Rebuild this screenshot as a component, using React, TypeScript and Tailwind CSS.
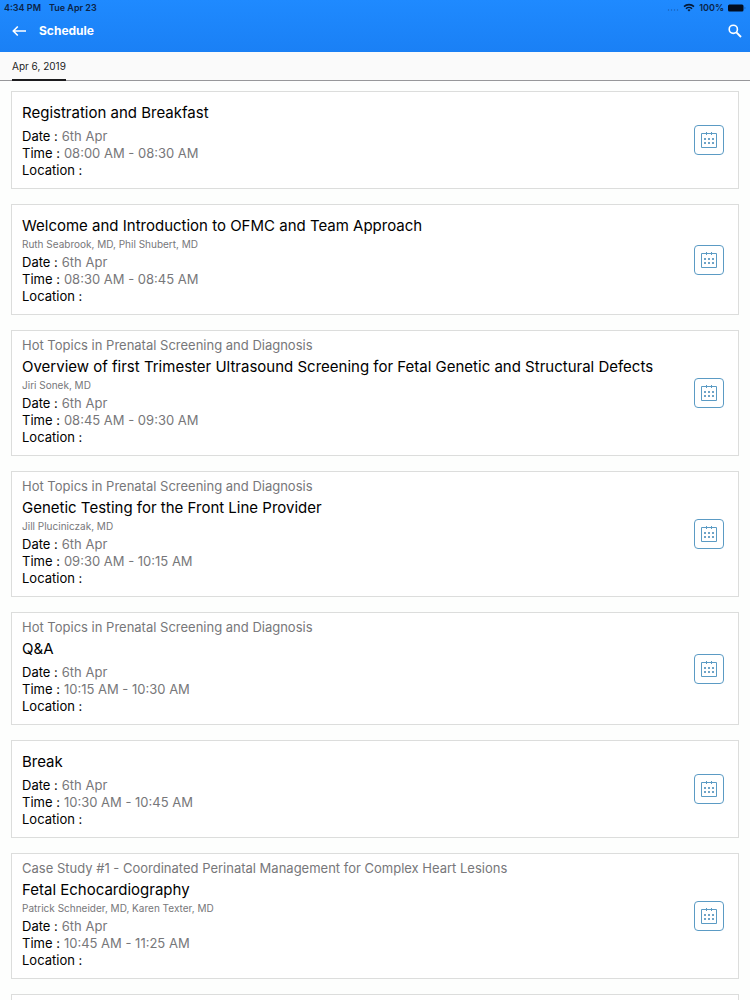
import React from 'react';

interface Session {
  id: number;
  track?: string;
  title: string;
  speakers?: string;
  date: string;
  time: string;
  location: string;
}

const sessions: Session[] = [
  { id: 1, title: 'Registration and Breakfast', date: '6th Apr', time: '08:00 AM - 08:30 AM', location: '' },
  {
    id: 2,
    title: 'Welcome and Introduction to OFMC and Team Approach',
    speakers: 'Ruth Seabrook, MD, Phil Shubert, MD',
    date: '6th Apr',
    time: '08:30 AM - 08:45 AM',
    location: '',
  },
  {
    id: 3,
    track: 'Hot Topics in Prenatal Screening and Diagnosis',
    title: 'Overview of first Trimester Ultrasound Screening for Fetal Genetic and Structural Defects',
    speakers: 'Jiri Sonek, MD',
    date: '6th Apr',
    time: '08:45 AM - 09:30 AM',
    location: '',
  },
  {
    id: 4,
    track: 'Hot Topics in Prenatal Screening and Diagnosis',
    title: 'Genetic Testing for the Front Line Provider',
    speakers: 'Jill Pluciniczak, MD',
    date: '6th Apr',
    time: '09:30 AM - 10:15 AM',
    location: '',
  },
  {
    id: 5,
    track: 'Hot Topics in Prenatal Screening and Diagnosis',
    title: 'Q&A',
    date: '6th Apr',
    time: '10:15 AM - 10:30 AM',
    location: '',
  },
  { id: 6, title: 'Break', date: '6th Apr', time: '10:30 AM - 10:45 AM', location: '' },
  {
    id: 7,
    track: 'Case Study #1 - Coordinated Perinatal Management for Complex Heart Lesions',
    title: 'Fetal Echocardiography',
    speakers: 'Patrick Schneider, MD, Karen Texter, MD',
    date: '6th Apr',
    time: '10:45 AM - 11:25 AM',
    location: '',
  },
];

const CalendarIcon = () => (
  <svg viewBox="0 0 18 18" className="h-[18px] w-[18px]" fill="none" stroke="#5b9bc4" aria-hidden="true">
    <path d="M1.5 2.5h15v14h-15z" />
    <path d="M6.5 1v3M11.5 1v3" />
    <g fill="#3f86b4" stroke="none">
      <circle cx="5" cy="8" r="1" />
      <circle cx="9" cy="8" r="1" />
      <circle cx="13" cy="8" r="1" />
      <circle cx="5" cy="12" r="1" />
      <circle cx="9" cy="12" r="1" />
      <circle cx="13" cy="12" r="1" />
    </g>
  </svg>
);

const StatusBar = () => (
  <div className="flex h-[15px] items-center justify-between px-1 text-[9px] leading-[15px] font-semibold text-[#0b2447]">
    <div className="flex gap-2">
      <span>4:34 PM</span>
      <span>Tue Apr 23</span>
    </div>
    <div className="flex items-center gap-1">
      <svg viewBox="0 0 12 8" className="h-2 w-3" fill="#1560b8" aria-hidden="true">
        <circle cx="1.5" cy="6" r="0.7" />
        <circle cx="4.5" cy="6" r="0.7" />
        <circle cx="7.5" cy="6" r="0.7" />
        <circle cx="10.5" cy="6" r="0.7" />
      </svg>
      <svg viewBox="0 0 12 9" className="h-[9px] w-3" fill="none" stroke="#061a36" strokeWidth="1.6" aria-hidden="true">
        <path d="M1 3.6a7.2 7.2 0 0 1 10 0" />
        <path d="M3 5.7a4.3 4.3 0 0 1 6 0" />
        <path d="M4.5 6.9a2.2 2.2 0 0 1 3 0L6 8.5z" fill="#061a36" stroke="none" />
      </svg>
      <span>100%</span>
      <svg viewBox="0 0 18 8" className="h-2 w-[18px]" fill="#020d1f" aria-hidden="true">
        <rect x="0" y="0.5" width="15.5" height="7" rx="1.5" />
        <path d="M16.5 2.8q1 .3 1 1.2t-1 1.2z" fill="#1560b8" />
      </svg>
    </div>
  </div>
);

const SessionCard: React.FC<{ session: Session }> = ({ session }) => (
  <article className="flex items-center justify-between border border-[#dcdddc] bg-white pr-[14px] pl-[10px]">
    <div className="pt-[7px] pb-[9px]">
      {session.track && <p className="text-[13px] leading-[15px] text-[#77777a]">{session.track}</p>}
      <h2 className="mt-[3px] mb-px text-[15px] leading-[22px] text-black">{session.title}</h2>
      {session.speakers && <p className="text-[10px] leading-[13px] text-[#77777a]">{session.speakers}</p>}
      <dl className="pt-[3px] text-[13px] leading-[17px] text-[#77777a]">
        <div className="flex gap-1">
          <dt className="text-black">Date :</dt>
          <dd>{session.date}</dd>
        </div>
        <div className="flex gap-1">
          <dt className="text-black">Time :</dt>
          <dd>{session.time}</dd>
        </div>
        <div className="flex gap-1">
          <dt className="text-black">Location :</dt>
          <dd>{session.location}</dd>
        </div>
      </dl>
    </div>
    <button
      aria-label={`Add ${session.title} to calendar`}
      className="flex h-[30px] w-[30px] shrink-0 items-center justify-center rounded-[4px] border border-[#5b9bc4]"
    >
      <CalendarIcon />
    </button>
  </article>
);

export default function App() {
  return (
    <div className="flex h-screen flex-col overflow-hidden bg-[#fdfefd] font-['Inter','Liberation_Sans',sans-serif]">
      {/* Header */}
      <header className="h-[52px] shrink-0 bg-linear-to-b from-[#1f8aff] to-[#1a80f5]">
        <StatusBar />
        <div className="flex h-8 items-center justify-between pr-2 pl-3 text-white">
          <div className="flex items-center gap-3">
            <button aria-label="Back">
              <svg viewBox="0 0 15 12" className="h-3 w-[15px]" fill="none" stroke="currentColor" strokeWidth="1.6" aria-hidden="true">
                <path d="M14 6H1.5M5.8 1.5L1.3 6l4.5 4.5" />
              </svg>
            </button>
            <h1 className="text-xs leading-4 font-bold">Schedule</h1>
          </div>
          <button aria-label="Search">
            <svg viewBox="0 0 14 14" className="h-[14px] w-[14px]" fill="none" stroke="currentColor" strokeWidth="1.6" aria-hidden="true">
              <circle cx="5.3" cy="5.3" r="4.1" />
              <path d="M8.4 8.4l4.6 4.6" strokeWidth="1.9" />
            </svg>
          </button>
        </div>
      </header>

      {/* Day tabs */}
      <nav className="flex h-[29px] shrink-0 border-b border-[#97979a] bg-[#fafafa] px-3">
        <a href="#apr-6" className="h-[29px] border-b-2 border-[#1c1c1e] text-[10px] leading-7 text-[#1c1c1e]">
          Apr 6, 2019
        </a>
      </nav>

      {/* Sessions */}
      <main className="flex flex-col gap-[15px] px-[11px] pt-[10px]">
        {sessions.map((session) => (
          <SessionCard key={session.id} session={session} />
        ))}
        <div className="h-24 shrink-0 border border-[#dcdddc] bg-white" />
      </main>
    </div>
  );
}
